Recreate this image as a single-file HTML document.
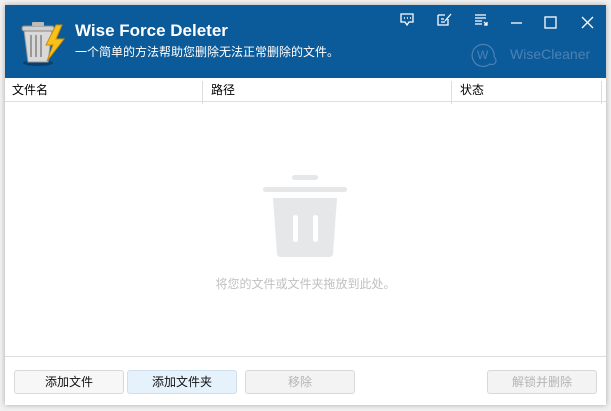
<!DOCTYPE html>
<html><head><meta charset="utf-8"><style>
body{margin:0;width:611px;height:411px;background:#f0f0f0;position:relative;overflow:hidden;font-family:"Liberation Sans","Noto Sans CJK SC",sans-serif;}
.win{position:absolute;left:5px;top:5px;width:601px;height:400px;background:#fff;box-shadow:0 0 5px rgba(0,0,0,.3);}
.hdr{position:absolute;left:0;top:0;width:601px;height:73px;background:#0b5a9a;color:#fff;}
.title{position:absolute;left:70px;top:16px;font-size:17px;font-weight:bold;}
.sub{position:absolute;left:70px;top:38px;font-size:12px;}
.cols{position:absolute;left:0;top:73px;width:601px;height:23px;border-bottom:1px solid #ddd;font-size:12px;color:#000;}
.cols div{position:absolute;top:3px;}
.sep{position:absolute;top:0;width:1px;height:23px;background:#ddd;}
.empty{position:absolute;left:0;width:601px;top:270px;text-align:center;font-size:12px;color:#c0c0c0;}
.bot{position:absolute;left:0;top:351px;width:601px;border-top:1px solid #ddd;}
.btn{position:absolute;top:365px;height:22px;width:108px;border:1px solid #d8d8d8;border-radius:3px;background:#f7f7f7;font-size:12px;text-align:center;line-height:22px;color:#111;}
.dis{color:#b5b5b5;background:#f3f3f3;}
</style></head><body>
<div class="win">
<div class="hdr">
<svg style="position:absolute;left:15px;top:14px" width="52" height="48" viewBox="0 0 52 48">
<ellipse cx="18" cy="44" rx="15" ry="3" fill="#083f6c"/>
<path d="M4 11 L32 11 L28 43 L8 43 Z" fill="#d9d9d9" stroke="#9a9a9a"/>
<rect x="2" y="7" width="32" height="5" rx="2" fill="#cfcfcf" stroke="#888"/>
<rect x="12" y="3" width="12" height="4" rx="1" fill="#bbb"/>
<path d="M11 16v22M16 16v22M21 16v22" stroke="#999" stroke-width="2"/>
<path d="M36 6 L26 26 L33 26 L27 42 L44 20 L36 20 L42 6 Z" fill="#f6c21b" stroke="#d18a00"/>
</svg>
<div class="title">Wise Force Deleter</div>
<div class="sub">一个简单的方法帮助您删除无法正常删除的文件。</div>
<svg style="position:absolute;left:390px;top:5px" width="211" height="20" viewBox="0 0 211 20" fill="none" stroke="#fff" stroke-width="1.3">
<path d="M6 4h12v8h-4l-2 3-2-3h-4z"/><path d="M9 8h1M12 8h1M15 8h1" stroke-width="1.6"/>
<path d="M43 5h7M43 5v10h10v-6M50 11l6-7" /><path d="M46 9h3M46 12h4"/>
<path d="M80 5h11M80 8h11M80 11h7M80 14h7M89 12l3 3M89 15h3v-3"/>
<path d="M116 13h11"/>
<rect x="150" y="7" width="11" height="11"/>
<path d="M187 7l11 11M198 7l-11 11"/>
</svg>
<svg style="position:absolute;left:465px;top:32px" width="130" height="34" viewBox="0 0 130 34" fill="none" stroke="#4d81b3" stroke-width="1.2">
<path d="M24 20a11 11 0 1 0 -4 7 a4 4 0 1 0 4 -7"/>
<text x="7" y="22" fill="#4d81b3" stroke="none" font-size="12" font-family="Liberation Sans">W</text>
<text x="40" y="22" fill="#4d81b3" stroke="none" font-size="14" font-family="Liberation Sans">WiseCleaner</text>
</svg>
</div>
<div class="cols">
<div style="left:7px">文件名</div>
<div class="sep" style="left:197px"></div>
<div style="left:206px">路径</div>
<div class="sep" style="left:446px"></div>
<div style="left:455px">状态</div>
<div class="sep" style="left:596px"></div>
</div>
<svg style="position:absolute;left:258px;top:170px" width="90" height="90" viewBox="0 0 90 90" fill="#e6e7e9">
<rect x="29" y="0" width="26" height="5" rx="2.5"/>
<rect x="0" y="12" width="84" height="5" rx="2.5"/>
<path d="M10 23h64l-4 56a4 4 0 0 1-4 3H18a4 4 0 0 1-4-3z"/>
<rect x="30" y="40" width="5" height="27" rx="2.5" fill="#fff"/>
<rect x="50" y="40" width="5" height="27" rx="2.5" fill="#fff"/>
</svg>
<div class="empty">将您的文件或文件夹拖放到此处。</div>
<div class="bot"></div>
<div class="btn" style="left:9px">添加文件</div>
<div class="btn" style="left:122px;background:#e5f1fb;border-color:#cfdfee">添加文件夹</div>
<div class="btn dis" style="left:240px">移除</div>
<div class="btn dis" style="left:482px">解锁并删除</div>
</div>
</body></html>
